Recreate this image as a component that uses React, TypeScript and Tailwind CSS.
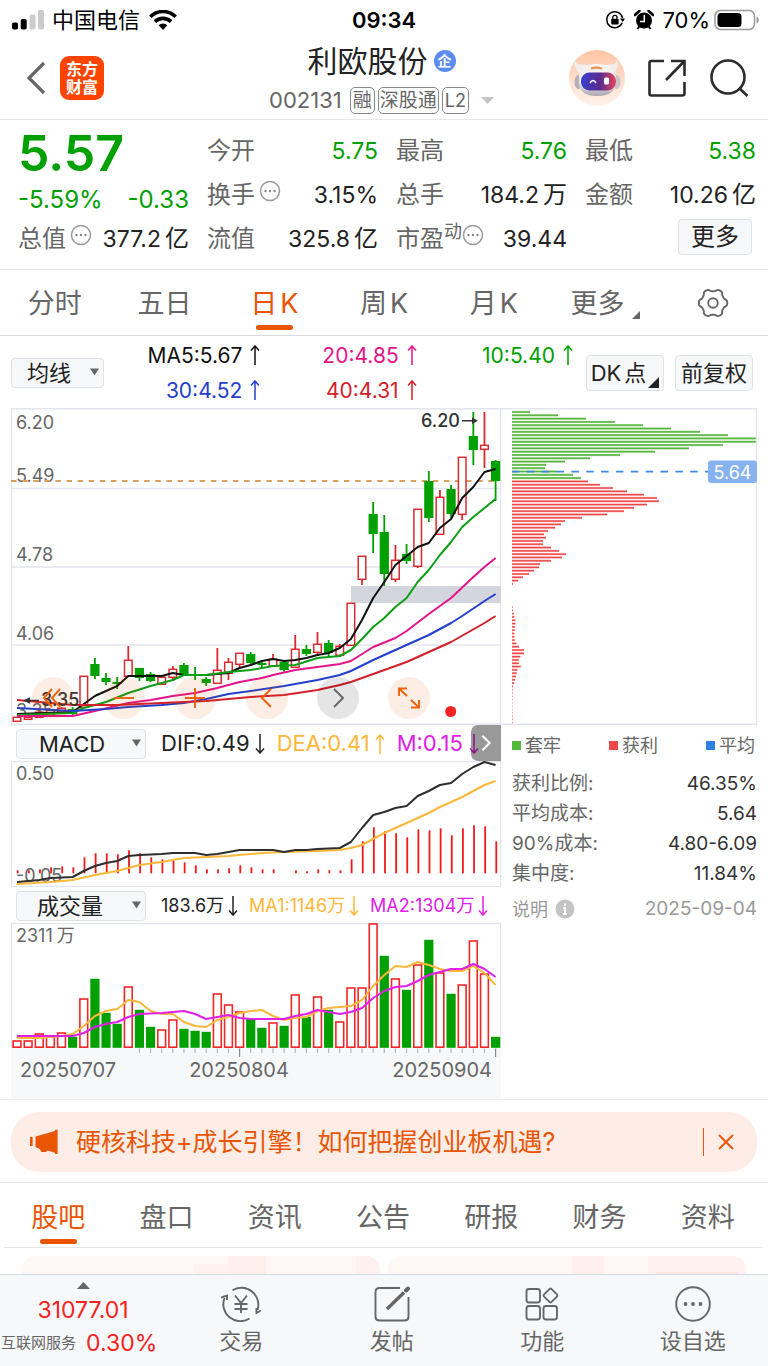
import React from "react";

type Point = [number, number];

const STEP = 11.13;
const FIRST = 6;
const cx = (i: number) => FIRST + STEP * i;

const RED = "#d92b2f";
const GREEN = "#00a000";

// [open/close top, bottom, high, low, rising] measured from the top of the price panel
const candles: [number, number, number, number, boolean][] = [
  [309, 313, 309, 313, true],
  [309, 311, 308, 311, true],
  [304, 309, 303, 310, true],
  [302, 307, 301, 308, true],
  [300, 304, 299, 306, true],
  [301, 306, 299, 307, false],
  [268, 299, 268, 299, true],
  [256, 268, 250, 271, false],
  [270, 274, 265, 277, false],
  [274, 276, 269, 281, false],
  [252, 268, 238, 268, true],
  [260, 270, 260, 273, false],
  [266, 273, 264, 274, false],
  [269, 276, 268, 276, true],
  [261, 269, 258, 273, true],
  [257, 267, 255, 268, false],
  [266, 268, 259, 272, false],
  [271, 275, 269, 278, false],
  [262, 275, 240, 275, true],
  [254, 265, 250, 272, true],
  [245, 256, 245, 259, true],
  [246, 255, 244, 256, false],
  [255, 257, 254, 260, false],
  [251, 258, 246, 258, true],
  [254, 262, 252, 264, false],
  [241, 259, 227, 259, true],
  [241, 246, 237, 248, false],
  [236, 244, 224, 248, true],
  [235, 245, 232, 250, false],
  [238, 247, 236, 249, true],
  [195, 237, 195, 237, true],
  [148, 171, 148, 177, true],
  [106, 126, 94, 145, false],
  [124, 166, 107, 178, false],
  [152, 171, 137, 174, true],
  [146, 153, 136, 156, false],
  [101, 158, 101, 160, true],
  [73, 110, 63, 114, false],
  [89, 126, 82, 126, true],
  [81, 106, 77, 110, false],
  [49, 106, 49, 112, true],
  [28, 42, 4, 57, false],
  [37, 41, 4, 60, true],
  [53, 73, 52, 93, false],
];

const ma5: Point[] = [[0, 306], [5, 304], [6, 296], [7, 288], [8, 283], [9, 278], [10, 268], [12, 268], [13, 268], [14, 265], [15, 267], [17, 267], [19, 265], [20, 260], [21, 257], [22, 253], [23, 251], [24, 253], [25, 252], [26, 250], [27, 247], [28, 245], [29, 240], [30, 231], [31, 212], [32, 190], [33, 174], [34, 157], [35, 148], [36, 139], [37, 135], [38, 120], [39, 111], [40, 90], [41, 79], [42, 64], [43, 61]];
const ma10: Point[] = [[0, 307], [5, 305], [6, 300], [8, 294], [10, 285], [12, 278], [14, 272], [15, 267], [17, 267], [19, 264], [21, 262], [23, 258], [25, 257], [27, 250], [29, 248], [30, 242], [31, 231], [32, 219], [33, 210], [34, 199], [35, 190], [36, 174], [37, 162], [38, 147], [39, 134], [40, 119], [41, 109], [42, 100], [43, 91]];
const ma20: Point[] = [[0, 308], [5, 308], [7, 303], [10, 295], [12, 292], [14, 288], [16, 285], [18, 280], [20, 274], [22, 270], [23, 267], [25, 262], [27, 259], [29, 256], [30, 253], [32, 239], [34, 230], [35, 223], [37, 206], [39, 190], [41, 169], [42, 159], [43, 150]];
const ma30: Point[] = [[0, 300], [5, 303], [8, 301], [10, 299], [13, 297], [15, 295], [17, 291], [19, 286], [21, 283], [24, 278], [27, 272], [29, 267], [30, 263], [32, 252], [34, 242], [37, 227], [39, 215], [40, 208], [42, 193], [43, 186]];
const ma40: Point[] = [[0, 292], [3, 295], [5, 297], [9, 297], [13, 295], [17, 293], [21, 289], [24, 287], [27, 282], [29, 277], [30, 274], [32, 266], [35, 254], [39, 234], [42, 215], [43, 208]];

const macdBars = [3, 3, 4, 6, 7, 6, 16, 20, 20, 19, 23, 20, 16, 14, 13, 11, 8, 4, 4, 5, 8, 6, 4, 4, 0, 3, 2, 4, 3, 3, 14, 32, 46, 42, 40, 36, 44, 43, 45, 38, 45, 48, 47, 32];
const dif: Point[] = [[0, 121], [2, 119], [3, 117], [5, 116], [6, 110], [7, 105], [8, 102], [9, 100], [10, 95], [11, 94], [13, 93], [14, 92], [16, 92], [17, 94], [18, 93], [19, 91], [20, 89], [23, 89], [24, 91], [25, 89], [26, 89], [27, 88], [29, 87], [30, 81], [31, 67], [32, 54], [33, 51], [34, 47], [35, 45], [36, 35], [37, 30], [38, 24], [39, 22], [40, 13], [41, 6], [42, 1], [43, 4]];
const dea: Point[] = [[0, 123], [3, 121], [5, 119], [7, 114], [9, 110], [11, 104], [13, 101], [15, 97], [17, 96], [19, 95], [22, 92], [24, 91], [27, 90], [29, 89], [30, 87], [31, 84], [33, 72], [35, 62], [37, 52], [38, 46], [39, 41], [40, 36], [42, 24], [43, 20]];

// [height, rising]
const volumes: [number, boolean][] = [
  [7, true], [7, true], [14, true], [11, true], [15, true], [11, false], [49, true], [69, false], [35, false], [24, false],
  [61, true], [38, false], [21, false], [18, true], [28, true], [19, false], [17, false], [16, false], [54, true], [43, true],
  [36, true], [29, false], [20, false], [25, true], [22, false], [53, true], [31, false], [51, true], [38, false], [26, true],
  [60, true], [60, true], [124, true], [92, false], [69, true], [58, false], [83, true], [108, false], [75, true], [54, false],
  [63, true], [107, true], [74, true], [11, false],
];
const vol1: Point[] = [[0, 115], [2, 115], [4, 113], [5, 111], [6, 103], [7, 93], [8, 88], [9, 86], [10, 77], [11, 79], [12, 88], [13, 91], [14, 91], [15, 99], [16, 103], [17, 104], [18, 97], [19, 94], [20, 90], [21, 88], [22, 87], [23, 93], [24, 97], [25, 95], [26, 94], [27, 88], [28, 85], [29, 84], [30, 83], [31, 77], [32, 63], [33, 52], [34, 43], [35, 44], [36, 39], [37, 42], [38, 46], [39, 48], [40, 48], [41, 43], [42, 50], [43, 62]];
const vol2: Point[] = [[0, 113], [5, 113], [6, 110], [7, 104], [8, 101], [9, 99], [10, 94], [11, 91], [13, 90], [15, 88], [16, 91], [17, 96], [18, 94], [19, 92], [20, 95], [21, 96], [24, 96], [25, 93], [26, 91], [27, 87], [28, 89], [29, 91], [30, 89], [31, 85], [32, 75], [33, 68], [34, 64], [35, 63], [36, 58], [37, 52], [38, 49], [39, 46], [40, 46], [41, 41], [42, 46], [43, 54]];

const chips = [
  18, 46, 74, 103, 131, 159, 188, 216, 244, 244, 211, 177, 143, 108, 78, 53, 34, 33, 45, 61, 69, 76, 88, 101, 115, 132, 145, 147, 135, 122,
  112, 95, 70, 53, 49, 43, 36, 32, 34, 31, 31, 39, 47, 54, 50, 39, 28, 27, 22, 17, 11, 6, 1, 0, 0, 0, 0, 0, 0, 0.6,
  0.8, 1.6, 2.3, 3.3, 3.3, 3, 2.7, 2.3, 2.3, 2.7, 4.3, 7, 12, 12, 8.3, 6.7, 6.7, 8.7, 5.3, 4.7, 4, 3, 2.3, 1, 0.5, 0.5, 0.4, 0.4, 0.3, 0.3,
  0.3, 0.4, 0.5, 0.5, 0.5,
];

function Line({ points, color, width = 2 }: { points: Point[]; color: string; width?: number }) {
  return (
    <polyline
      points={points.map(([i, y]) => `${cx(i).toFixed(1)},${y}`).join(" ")}
      fill="none"
      stroke={color}
      strokeWidth={width}
      strokeLinejoin="round"
    />
  );
}

function PriceChart() {
  return (
    <svg viewBox="0 0 490 317" className="block h-auto w-full" role="img" aria-label="日K线图">
      <g stroke="#e3e5ec" strokeWidth="1.4">
        <path d="M0 80.500H490M0 159H490M0 237H490" />
        <path d="M0 .7H490M.6 0V317M489.500 0V317M0 316.300H490" fill="none" />
      </g>
      <rect x="340" y="178" width="150" height="17" fill="#d3d6dd" />
      <g fontSize="18" fill="#666">
        <text x="5" y="21">6.20</text>
        <text x="5" y="74">5.49</text>
        <text x="5" y="153">4.78</text>
        <text x="5" y="232">4.06</text>
        <text x="5" y="309">3.35</text>
      </g>
      <path d="M0 73H484" stroke="#d9a05f" strokeWidth="1.800" strokeDasharray="5.500 5.600" />
      {candles.map(([t, b, h, l, up], i) => (
        <g key={i}>
          {h < t && <path d={`M${cx(i)} ${h}V${t}`} stroke={up ? RED : GREEN} strokeWidth="1.800" />}
          {l > b && <path d={`M${cx(i)} ${b}V${l}`} stroke={up ? RED : GREEN} strokeWidth="1.800" />}
          {up ? (
            <rect x={cx(i) - 3.8} y={t + 0.3} width="7.600" height={b - t} fill="#fff" stroke={RED} strokeWidth="1.500" />
          ) : (
            <rect x={cx(i) - 4.6} y={t} width="9.200" height={b - t} fill={GREEN} />
          )}
        </g>
      ))}
      <Line points={ma5} color="#111" />
      <Line points={ma10} color="#0a9f14" />
      <Line points={ma20} color="#e4148a" />
      <Line points={ma30} color="#2340cc" />
      <Line points={ma40} color="#d3202a" />
      <g fontSize="18" fontWeight="500" fill="#333">
        <text x="410" y="19">6.20</text>
        <text x="30" y="298">3.35</text>
      </g>
      <g stroke="#333" strokeWidth="1.600">
        <path d="M451 12.700H462M16 292.500H28" />
      </g>
      <path d="M467 12.700L461 9.500V16ZM12 292.500L19 289.300V295.700Z" fill="#333" />
      <circle cx="439.700" cy="303.500" r="5.500" fill="#f52222" />
    </svg>
  );
}

function MacdChart() {
  return (
    <svg viewBox="0 0 490 126" className="block h-auto w-full overflow-visible" role="img" aria-label="MACD">
      <path d="M0 .6H490M.6 0V126M489.500 0V126M0 125.500H490" stroke="#e3e5ec" strokeWidth="1.200" />
      <g fontSize="18" fill="#666">
        <text x="5" y="19">0.50</text>
        <text x="5" y="121">-0.05</text>
      </g>
      {macdBars.map((h, i) => (
        <rect key={i} x={cx(i) - 0.2} y={112.3 - h} width="1.800" height={h} fill="#f01a1a" />
      ))}
      <Line points={dea} color="#fdb73a" />
      <Line points={dif} color="#2e2e2e" />
    </svg>
  );
}

function VolumeChart() {
  return (
    <svg viewBox="0 0 490 176" className="block h-auto w-full" role="img" aria-label="成交量">
      <rect x="0" y="125" width="490" height="51" fill="#f7f8fa" />
      <path d="M0 .6H490M.6 0V125M489.500 0V125" stroke="#e3e5ec" strokeWidth="1.200" />
      <text x="5" y="19" fontSize="18" fill="#666">2311<tspan dx="4">万</tspan></text>
      {volumes.map(([h, up], i) =>
        up ? (
          <rect key={i} x={cx(i) - 3.9} y={125 - h} width="7.800" height={h - 0.8} fill="#fff" stroke="#f02626" strokeWidth="1.600" />
        ) : (
          <rect key={i} x={cx(i) - 4.6} y={124.8 - h} width="9.200" height={h} fill={GREEN} />
        )
      )}
      {volumes.map((_, i) =>
        i > 10 ? (
          <path key={i} d={`M${cx(i)} 125.500V${i === 20 || i === 43 ? 134 : 130}`} stroke={i === 20 || i === 43 ? "#888" : "#b5b5b8"} strokeWidth="1.200" />
        ) : null
      )}
      <Line points={vol1} color="#fdb73a" />
      <Line points={vol2} color="#e020e8" />
      <g fontSize="20" fill="#666">
        <text x="9" y="154">20250707</text>
        <text x="228" y="154" textAnchor="middle">20250804</text>
        <text x="481" y="154" textAnchor="end">20250904</text>
      </g>
    </svg>
  );
}

function ChipChart() {
  return (
    <svg viewBox="0 0 256 317" className="block h-auto w-full" role="img" aria-label="筹码分布">
      {chips.map((w, i) => {
        const y = 2.9 + i * 3.306;
        const green = i < 21;
        return (
          <g key={i}>
            <rect x="11" y={y} width={w} height="2.200" fill={green ? "#9bd48a" : "#f6a3a3"} />
            <rect x="11" y={y + 0.5} width={w} height="1.200" fill={green ? "#55b53c" : "#ee4545"} />
          </g>
        );
      })}
      <path d="M0 .7H256M255.400 0V317M0 316.300H256" stroke="#e3e5ec" strokeWidth="1.400" fill="none" />
      <path d="M11 63.600H208" stroke="#3c8ae6" strokeWidth="1.800" strokeDasharray="7.500 7.350" />
      <rect x="207" y="52.500" width="49" height="22.500" rx="3" fill="#86b2ef" />
      <text x="231.500" y="70.500" fontSize="18" fill="#fff" textAnchor="middle">5.64</text>
    </svg>
  );
}

function Arrow({ down = false }: { down?: boolean }) {
  return (
    <svg viewBox="0 0 10 20" className="inline-block h-5 w-[10px] shrink-0" fill="none" stroke="currentColor" strokeWidth="1.500" aria-hidden="true">
      {down ? <path d="M5 0V19M1 14.500L5 19L9 14.500" /> : <path d="M5 20V1M1 5.500L5 1L9 5.500" />}
    </svg>
  );
}

function MoreDots() {
  return (
    <svg viewBox="0 0 22 22" className="h-[22px] w-[22px] shrink-0 text-[#999]" aria-hidden="true">
      <circle cx="11" cy="11" r="9.500" fill="none" stroke="currentColor" strokeWidth="1.500" />
      <g fill="#888">
        <circle cx="6.500" cy="11" r="1.200" />
        <circle cx="11" cy="11" r="1.200" />
        <circle cx="15.500" cy="11" r="1.200" />
      </g>
    </svg>
  );
}

function Dropdown({ label, value, className }: { label: string; value: string; className: string }) {
  return (
    <div className="relative shrink-0">
      <select aria-label={label} className={`block appearance-none rounded-[4px] border border-[#dfe1e7] bg-[#f7f8fa] text-[22px] leading-7 text-[#222] outline-none ${className}`}>
        <option>{value}</option>
      </select>
      <svg viewBox="0 0 10 8" className="pointer-events-none absolute top-[10px] right-[5px] h-2 w-[9px]" fill="#666" aria-hidden="true">
        <path d="M0 0H10L5 8Z" />
      </svg>
    </div>
  );
}

function StatusBar() {
  return (
    <div className="grid h-10 grid-cols-3 items-center px-3 text-[22px] leading-7 text-black">
      <div className="flex items-center">
        <svg viewBox="0 0 32 20" className="mr-2 h-5 w-8" aria-hidden="true">
          <rect x="0" y="12.500" width="6" height="7" rx="1.800" />
          <rect x="8.700" y="9" width="6" height="10.500" rx="1.800" />
          <rect x="17.600" y="4.500" width="6" height="15" rx="1.800" fill="#ccc" />
          <rect x="26" y="0" width="6" height="19.500" rx="1.800" fill="#ccc" />
        </svg>
        <span>中国电信</span>
        <svg viewBox="0 0 28 20" className="ml-[9px] h-5 w-7" fill="none" stroke="#000" strokeWidth="3.600" aria-hidden="true">
          <path d="M1.300 6.800A18 18 0 0 1 26.700 6.800" />
          <path d="M6 11.600A11.500 11.500 0 0 1 22 11.600" />
          <path d="M9.700 15.300L14 20L18.300 15.300A6.200 6.200 0 0 0 9.700 15.300Z" fill="#000" stroke="none" />
        </svg>
      </div>
      <div className="text-center font-semibold">09:34</div>
      <div className="-mr-1 flex items-center justify-end">
        <svg viewBox="0 0 20 20" className="mr-[9px] h-5 w-5" aria-hidden="true">
          <path d="M17.200 12.800A8 8 0 1 1 17.600 8" fill="none" stroke="#000" strokeWidth="1.500" />
          <path d="M14.800 8.500H20L17.800 12Z" />
          <rect x="6.200" y="8.800" width="7.400" height="5.800" rx="1" />
          <path d="M7.800 9V7.500A2.100 2.100 0 0 1 12 7.500V9" fill="none" stroke="#000" strokeWidth="1.300" />
        </svg>
        <svg viewBox="0 0 20 20" className="mr-2 h-5 w-5" aria-hidden="true">
          <circle cx="10" cy="10.500" r="8" />
          <path d="M1 5L5.500 .8M19 5L14.500 .8" stroke="#000" strokeWidth="2.600" strokeLinecap="round" />
          <path d="M3.500 19L5.500 16M16.500 19L14.500 16" stroke="#000" strokeWidth="2" />
          <path d="M10.300 5V11.500H6" stroke="#fff" strokeWidth="1.500" fill="none" />
        </svg>
        <span>70%</span>
        <svg viewBox="0 0 46 22" className="ml-1 h-[22px] w-[46px]" aria-hidden="true">
          <rect x="1" y="1.500" width="39.500" height="19" rx="5.500" fill="none" stroke="#999" strokeWidth="1.500" />
          <rect x="3.500" y="4" width="24" height="14" rx="3.500" />
          <path d="M42.500 7.500C45.500 8.500 45.500 13.500 42.500 14.500Z" fill="#999" />
        </svg>
      </div>
    </div>
  );
}

function Robot() {
  return (
    <svg viewBox="0 0 56 56" className="h-14 w-14" aria-hidden="true">
      <defs>
        <linearGradient id="halo" x1="0" y1="0" x2="0" y2="1">
          <stop offset="0" stopColor="#ffc5a6" />
          <stop offset="1" stopColor="#fff3ec" />
        </linearGradient>
        <linearGradient id="visor" x1="0" y1="0" x2="1" y2="0">
          <stop offset="0" stopColor="#3a3fd0" />
          <stop offset=".55" stopColor="#5a2a8c" />
          <stop offset="1" stopColor="#e8475a" />
        </linearGradient>
        <linearGradient id="helmet" x1="0" y1="0" x2="0" y2="1">
          <stop offset="0" stopColor="#f8f5f4" />
          <stop offset=".6" stopColor="#ece8ea" />
          <stop offset="1" stopColor="#a9a6ae" />
        </linearGradient>
      </defs>
      <circle cx="28" cy="28" r="28" fill="url(#halo)" />
      <path d="M6 9.500C6.500 13 9 15 13 14.500L18 15L11 23C6 20 4 14 6 9.500ZM48 9.500C47.500 13 45 15 42 14.500L37 15L44 23C49 20 50 14 48 9.500Z" fill="#f4eeed" />
      <ellipse cx="9.500" cy="32" rx="4" ry="7" fill="#b3b0ba" />
      <ellipse cx="47.500" cy="32" rx="4" ry="7" fill="#c9c6cc" />
      <path d="M10 28C10 17 17 14 28 14S46 17 47 28C48 40 42 46 28 46S9 40 10 28Z" fill="url(#helmet)" />
      <path d="M22 18.500C25 17.500 30 17.500 33 18.500" stroke="#ef9150" strokeWidth="2.200" fill="none" />
      <rect x="12" y="22.500" width="35" height="18" rx="8.500" fill="url(#visor)" />
      <path d="M21 33Q24 28 27 33" stroke="#fff" strokeWidth="1.600" fill="none" />
      <rect x="35" y="27.500" width="5" height="7" rx="1.500" fill="#fff" />
    </svg>
  );
}

function Header() {
  return (
    <header className="flex h-20 items-center border-b border-[#e6e6e8] pr-[19px] pb-[3px] pl-[26px]">
      <div className="flex flex-1 items-center gap-[14px]">
        <button aria-label="返回" className="text-[#666]">
          <svg viewBox="0 0 20 34" className="h-[34px] w-5" fill="none" stroke="currentColor" strokeWidth="3.200">
            <path d="M18 2L3 17L18 32" />
          </svg>
        </button>
        <a href="#home" className="grid h-11 w-11 place-items-center rounded-[9px] bg-[#ff4400] text-center text-[16px] leading-[18px] font-bold text-white">
          <span>东方<br />财富</span>
        </a>
      </div>
      <div className="flex shrink-0 flex-col items-center pt-px pr-3">
        <div className="flex h-9 items-center gap-[6px]">
          <h1 className="text-[30px] leading-9 text-[#222]">利欧股份</h1>
          <span className="grid h-[22px] w-[22px] place-items-center rounded-full bg-[#5b8def] text-[14px] leading-none font-bold text-white">企</span>
        </div>
        <div className="flex items-center gap-[3px] pt-2 text-[19px] leading-[25px] text-[#666]">
          <span className="mr-[5px] text-[22px]">002131</span>
          <span className="rounded-[5px] border border-[#888] px-[2px]">融</span>
          <span className="rounded-[5px] border border-[#888] px-[1px]">深股通</span>
          <span className="rounded-[5px] border border-[#888] px-[2px] text-[18px]">L2</span>
          <svg viewBox="0 0 13 7" className="ml-[9px] h-[7px] w-[13px]" fill="#c4c4c4" aria-hidden="true"><path d="M0 0H13L6.500 7Z" /></svg>
        </div>
      </div>
      <div className="flex flex-1 items-center justify-end gap-[22px]">
        <button aria-label="智能助手"><Robot /></button>
        <button aria-label="分享">
          <svg viewBox="0 0 40 40" className="h-10 w-10" fill="none" stroke="#2b2b2b" strokeWidth="2.600">
            <path d="M17 3H4.500Q2.500 3 2.500 5V35.500Q2.500 37.500 4.500 37.500H35Q37.500 37.500 37.500 35.500V24" />
            <path d="M24 3H37.500V18M37.500 3L19 22" />
          </svg>
        </button>
        <button aria-label="搜索">
          <svg viewBox="0 0 40 40" className="h-10 w-10" fill="none" stroke="#2b2b2b" strokeWidth="2.600">
            <circle cx="19" cy="19" r="16.500" />
            <path d="M30 30L38.500 38" />
          </svg>
        </button>
      </div>
    </header>
  );
}

type QuoteProps = { label: string; value: string; unit?: string; green?: boolean; dots?: boolean; sup?: string };

function Quote({ label, value, unit, green = false, dots = false, sup }: QuoteProps) {
  return (
    <div className="flex h-11 items-center justify-between whitespace-nowrap">
      <span className="flex items-center text-[24px] text-[#666]">
        {label}
        {sup && <span className="-mt-4 text-[18px]">{sup}</span>}
        {dots && <span className={sup ? "-mt-2" : "-mt-2 ml-1"}><MoreDots /></span>}
      </span>
      <span className={green ? "text-[23px] text-[#00a000]" : "text-[23px] text-[#222]"}>
        {value}
        {unit && <span className="ml-1 text-[24px]">{unit}</span>}
      </span>
    </div>
  );
}

function Quotes() {
  return (
    <section className="grid grid-cols-4 gap-x-[18px] border-b border-[#e6e6e8] pt-[9px] pr-3 pb-2 pl-[18px]">
      <div>
        <div className="flex h-12 items-center text-[50px] leading-none font-semibold text-[#00a000]">5.57</div>
        <div className="flex h-10 items-center justify-between pt-[6px] text-[24px] text-[#00a000]">
          <span>-5.59%</span>
          <span>-0.33</span>
        </div>
        <Quote label="总值" dots value="377.2" unit="亿" />
      </div>
      <div>
        <Quote label="今开" value="5.75" green />
        <Quote label="换手" dots value="3.15%" />
        <Quote label="流值" value="325.8" unit="亿" />
      </div>
      <div>
        <Quote label="最高" value="5.76" green />
        <Quote label="总手" value="184.2" unit="万" />
        <Quote label="市盈" sup="动" dots value="39.44" />
      </div>
      <div>
        <Quote label="最低" value="5.38" green />
        <Quote label="金额" value="10.26" unit="亿" />
        <div className="flex h-10 items-center justify-end pr-1">
          <button className="rounded-[4px] border border-[#dfe1e7] bg-[#f7f8fa] px-3 text-[24px] leading-[34px] text-[#222]">更多</button>
        </div>
      </div>
    </section>
  );
}

function GearIcon() {
  const points = Array.from({ length: 121 }, (_, i) => {
    const a = (i / 120) * Math.PI * 2;
    const r = 13 + 1.3 * Math.tanh(1.8 * Math.cos(6 * a));
    return `${(16 + r * Math.cos(a)).toFixed(2)},${(16 + r * Math.sin(a)).toFixed(2)}`;
  }).join(" ");
  return (
    <svg viewBox="0 0 32 32" className="h-8 w-8" fill="none" stroke="#666" strokeWidth="1.900" strokeLinejoin="round" aria-hidden="true">
      <polygon points={points} />
      <circle cx="16" cy="16" r="4.800" />
    </svg>
  );
}

function PeriodTabs() {
  return (
    <nav className="grid h-[66px] grid-cols-7 border-b border-[#d9dbe0] text-[27px] text-[#666]">
      {["分时", "五日", "日K", "周K", "月K", "更多"].map((t) => (
        <button key={t} className={t === "日K" ? "relative flex items-center justify-center pt-1 text-[#ea5504]" : "relative flex items-center justify-center pt-1"}>
          {t.endsWith("K") ? <span className="flex gap-[3px]"><span>{t[0]}</span><span>K</span></span> : t}
          {t === "日K" && <span className="absolute bottom-[5px] h-[5px] w-[37px] rounded-full bg-[#ea5504]" />}
          {t === "更多" && (
            <svg viewBox="0 0 8 8" className="mt-5 ml-2 -mr-1 h-2 w-2" fill="#666" aria-hidden="true"><path d="M8 0V8H0Z" /></svg>
          )}
        </button>
      ))}
      <button aria-label="设置" className="grid place-items-center"><GearIcon /></button>
    </nav>
  );
}

function Averages() {
  return (
    <div className="flex h-[72px] items-center pt-px pr-[15px] pl-[11px]">
      <Dropdown label="指标" value="均线" className="w-[93px] pl-[15px]" />
      <div className="grid flex-1 grid-cols-3 text-[21px] leading-[35px]">
        <span className="flex items-center justify-end gap-2 text-[#111]">MA5:5.67 <Arrow /></span>
        <span className="flex items-center justify-end gap-2 text-[#e4148a]">20:4.85 <Arrow /></span>
        <span className="flex items-center justify-end gap-2 text-[#00a000]">10:5.40 <Arrow /></span>
        <span className="flex items-center justify-end gap-2 text-[#2340cc]">30:4.52 <Arrow /></span>
        <span className="flex items-center justify-end gap-2 text-[#d3202a]">40:4.31 <Arrow /></span>
      </div>
      <div className="ml-[13px] flex gap-[11px] text-[22px] leading-[34px] text-[#222]">
        <button className="relative w-[78px] rounded-[4px] border border-[#dfe1e7] bg-[#f7f8fa] pr-[13px] whitespace-nowrap">
          <span className="flex justify-center gap-[3px]"><span>DK</span><span>点</span></span>
          <svg viewBox="0 0 11 11" className="absolute right-1 bottom-[2px] h-[11px] w-[11px]" fill="#222" aria-hidden="true"><path d="M11 0V11H0Z" /></svg>
        </button>
        <button className="w-[78px] rounded-[4px] border border-[#dfe1e7] bg-[#f7f8fa] whitespace-nowrap">前复权</button>
      </div>
    </div>
  );
}

const controls = [
  { label: "最左", d: "M20 12L12 21L20 30M28 12L20 21L28 30" },
  { label: "缩小", d: "M11 21H31" },
  { label: "放大", d: "M11 21H31M21 11V31" },
  { label: "左移", d: "M25 12L16 21L25 30" },
  { label: "右移", d: "M17 12L26 21L17 30" },
  { label: "全屏", d: "M11 19V11.500H19M12 12.500L19 19M31 23V30.500H23M30 29.500L23 23" },
];

function ChartControls() {
  return (
    <div className="absolute inset-x-[21px] bottom-[6px] flex justify-between pr-[50px]">
      {controls.map(({ label, d }) => (
        <button
          key={label}
          aria-label={label}
          className={label === "右移" ? "h-[42px] w-[42px] rounded-full bg-black/10 text-[#666]" : "h-[42px] w-[42px] rounded-full bg-[#ea5504]/10 text-[#f2600c]"}
        >
          <svg viewBox="0 0 42 42" className="h-[42px] w-[42px]" fill="none" stroke="currentColor" strokeWidth="1.900"><path d={d} /></svg>
        </button>
      ))}
    </div>
  );
}

function ChipPanel() {
  const rows = [
    ["获利比例:", "46.35%"],
    ["平均成本:", "5.64"],
    ["90%成本:", "4.80-6.09"],
    ["集中度:", "11.84%"],
  ];
  return (
    <div>
      <ChipChart />
      <div className="pl-[11px] text-[#666]">
        <div className="flex h-[41px] items-center justify-between pr-[2px] text-[18px]">
          <span className="flex items-center gap-1"><i className="h-[9px] w-[9px] bg-[#53b83c]" />套牢</span>
          <span className="flex items-center gap-1"><i className="h-[9px] w-[9px] bg-[#ee4848]" />获利</span>
          <span className="flex items-center gap-1"><i className="h-[9px] w-[9px] bg-[#2f80e3]" />平均</span>
        </div>
        <dl className="pt-[3px]">
          {rows.map(([k, v]) => (
            <div key={k} className="flex h-[30px] items-center justify-between text-[19px]">
              <dt>{k}</dt>
              <dd className="text-[#333]">{v}</dd>
            </div>
          ))}
        </dl>
        <div className="flex h-10 items-center justify-between text-[18px] text-[#999]">
          <a href="#help" className="flex items-center gap-[7px]">
            说明
            <svg viewBox="0 0 20 20" className="h-5 w-5" aria-hidden="true">
              <circle cx="10" cy="10" r="9.500" fill="#c4c4c4" />
              <path d="M10 4.500V6.800M8.500 9H10V15M8 15H12" stroke="#fff" strokeWidth="2" fill="none" />
            </svg>
          </a>
          <time dateTime="2025-09-04" className="text-[19px]">2025-09-04</time>
        </div>
      </div>
    </div>
  );
}

function Charts() {
  return (
    <section className="grid grid-cols-[490fr_256fr] border-b border-[#e9e9eb] pr-[11px] pl-[11px]">
      <div>
        <div className="relative">
          <PriceChart />
          <ChartControls />
        </div>
        <div className="relative flex h-9 items-center gap-3 pt-px pl-[5px] text-[22px] whitespace-nowrap">
          <Dropdown label="副图一" value="MACD" className="w-[130px] pl-[22px]" />
          <span className="ml-[3px] flex items-center gap-[5px] text-[#222]">DIF:0.49 <Arrow down /></span>
          <span className="flex items-center gap-[5px] text-[#fdb73a]">DEA:0.41 <Arrow /></span>
          <span className="flex items-center gap-[6px] text-[#e020e8]">M:0.15 <Arrow down /></span>
          <button aria-label="展开" className="absolute top-0 right-0 grid h-9 w-[30px] place-items-center rounded-l-[7px] bg-black/40">
            <svg viewBox="0 0 12 20" className="h-[18px] w-3" fill="none" stroke="#fff" strokeWidth="2.400"><path d="M2 2L10 10L2 18" /></svg>
          </button>
        </div>
        <MacdChart />
        <div className="flex h-9 items-center gap-[11px] pt-px pl-[5px] text-[18px] whitespace-nowrap">
          <Dropdown label="副图二" value="成交量" className="w-[130px] pl-5" />
          <span className="ml-1 flex items-center gap-1 text-[#222]">183.6万 <Arrow down /></span>
          <span className="flex items-center gap-1 text-[#fdb73a]">MA1:1146万 <Arrow down /></span>
          <span className="flex items-center gap-1 text-[#e020e8]">MA2:1304万 <Arrow down /></span>
        </div>
        <VolumeChart />
      </div>
      <ChipPanel />
    </section>
  );
}

function Notice() {
  return (
    <section className="border-b border-[#e6e6e8] px-[11px] pt-3 pb-[10px]">
      <div className="flex h-[60px] items-center rounded-[28px] bg-[#fdede6] pr-[23px] pl-[18px] text-[#ea5504]">
        <svg viewBox="0 0 30 26" className="mr-[17px] h-[26px] w-[30px]" fill="currentColor" aria-hidden="true">
          <rect x="1" y="8" width="2.600" height="9" />
          <path d="M6.500 7.500L26 2V.8H28.600V25H26V23.800L18.500 21.500L17 23H12.500L10.500 19.800L6.500 18Z" />
        </svg>
        <a href="#notice" className="flex-1 text-[25px] leading-9 whitespace-nowrap">硬核科技+成长引擎！如何把握创业板机遇?</a>
        <span className="mr-[14px] h-7 w-px bg-[#ea5504]" />
        <button aria-label="关闭">
          <svg viewBox="0 0 16 16" className="h-4 w-4" fill="none" stroke="currentColor" strokeWidth="1.900"><path d="M1 1L15 15M15 1L1 15" /></svg>
        </button>
      </div>
    </section>
  );
}

function InfoTabs() {
  return (
    <nav className="mr-[6px] ml-1 grid h-[65px] grid-cols-7 border-b border-[#e6e6e8] text-[27px] text-[#666]">
      {["股吧", "盘口", "资讯", "公告", "研报", "财务", "资料"].map((t, i) => (
        <button key={t} className={i === 0 ? "relative flex items-center justify-center pt-[6px] text-[#ea5504]" : "flex items-center justify-center pt-[6px]"}>
          {t}
          {i === 0 && <span className="absolute bottom-[3px] h-[5px] w-[37px] rounded-full bg-[#ea5504]" />}
        </button>
      ))}
    </nav>
  );
}

function Cards() {
  return (
    <section className="grid min-h-[26px] flex-1 grid-cols-2 gap-2 px-[22px] pt-2">
      <div className="flex justify-end overflow-hidden rounded-t-[14px] bg-[#fef7f4]">
        <div className="mt-2 h-full w-[34px] bg-[#fef1ee]" />
        <div className="mr-[90px] h-full w-[38px] bg-[#feefed]" />
        <div className="h-full w-6 bg-[#fef1ef]" />
      </div>
      <div className="flex justify-end overflow-hidden rounded-t-[14px] bg-[#fef7f4]">
        <div className="mr-11 h-full w-8 bg-[#feefed]" />
        <div className="h-full w-[98px] bg-[#fef1ef] px-2 pt-4">
          <div className="h-full bg-[#fde6e3]" />
        </div>
      </div>
    </section>
  );
}

function BottomBar() {
  const iconClass = "h-9 w-10";
  return (
    <footer className="sticky bottom-0 grid h-[92px] grid-cols-[166fr_602fr] border-t border-[#d3dce2] bg-[#f7f8fa] text-[#666]">
      <a href="#index" className="flex flex-col items-center pt-[7px]">
        <svg viewBox="0 0 13 7" className="h-[7px] w-[13px]" fill="#666" aria-hidden="true"><path d="M0 7H13L6.500 0Z" /></svg>
        <span className="mt-[5px] text-[23px] leading-[33px] text-[#f52222]">31077.01</span>
        <span className="flex w-full items-center gap-[10px] pl-px whitespace-nowrap">
          <span className="text-[15px]">互联网服务</span>
          <span className="text-[23px] leading-[33px] text-[#f52222]">0.30%</span>
        </span>
      </a>
      <nav className="grid grid-cols-4 text-[22px] leading-[38px]">
        <button className="flex flex-col items-center pt-[11px]">
          <svg viewBox="0 0 40 36" className={iconClass} fill="none" stroke="currentColor" strokeWidth="1.900" aria-hidden="true">
            <path d="M11.500 4.200A17 17 0 0 1 36.500 24M28.500 32.500A17 17 0 0 1 3.500 12" />
            <path d="M0 11.500L6 9.500V14M40 24.500L35.500 27V22" />
            <path d="M14 9.500L20 17L26 9.500M20 17V27M13.500 18H26.500M13.500 23H26.500" />
          </svg>
          交易
        </button>
        <button className="flex flex-col items-center pt-[11px]">
          <svg viewBox="0 0 40 36" className={iconClass} fill="none" stroke="currentColor" strokeWidth="1.900" aria-hidden="true">
            <path d="M28 2H7.500Q3.500 2 3.500 6V30.500Q3.500 34.500 7.500 34.500H32.500Q36.500 34.500 36.500 30.500V11" />
            <path d="M15 23L32 6.500" strokeWidth="3.400" />
            <path d="M34 4.500L36 2.500" strokeWidth="4" strokeLinecap="round" />
          </svg>
          发帖
        </button>
        <button className="flex flex-col items-center pt-[11px]">
          <svg viewBox="0 0 40 36" className={iconClass} fill="none" stroke="currentColor" strokeWidth="1.900" aria-hidden="true">
            <rect x="4.500" y="3" width="13.500" height="13.500" rx="2.500" />
            <rect x="4.500" y="20" width="13.500" height="13.500" rx="2.500" />
            <rect x="21.500" y="20" width="13.500" height="13.500" rx="2.500" />
            <rect x="23.200" y="4.200" width="10.600" height="10.600" rx="1.500" transform="rotate(45 28.500 9.500)" />
          </svg>
          功能
        </button>
        <button className="flex flex-col items-center pt-[11px]">
          <svg viewBox="0 0 40 36" className={iconClass} aria-hidden="true">
            <circle cx="20" cy="18" r="16.800" fill="none" stroke="currentColor" strokeWidth="1.900" />
            <g fill="currentColor">
              <circle cx="12.500" cy="18" r="1.900" />
              <circle cx="20" cy="18" r="1.900" />
              <circle cx="27.500" cy="18" r="1.900" />
            </g>
          </svg>
          设自选
        </button>
      </nav>
    </footer>
  );
}

export default function App() {
  return (
    <div className="flex min-h-screen flex-col bg-white font-['Inter','Noto_Sans_CJK_SC',sans-serif]">
      <StatusBar />
      <Header />
      <Quotes />
      <PeriodTabs />
      <Averages />
      <Charts />
      <Notice />
      <InfoTabs />
      <Cards />
      <BottomBar />
    </div>
  );
}
